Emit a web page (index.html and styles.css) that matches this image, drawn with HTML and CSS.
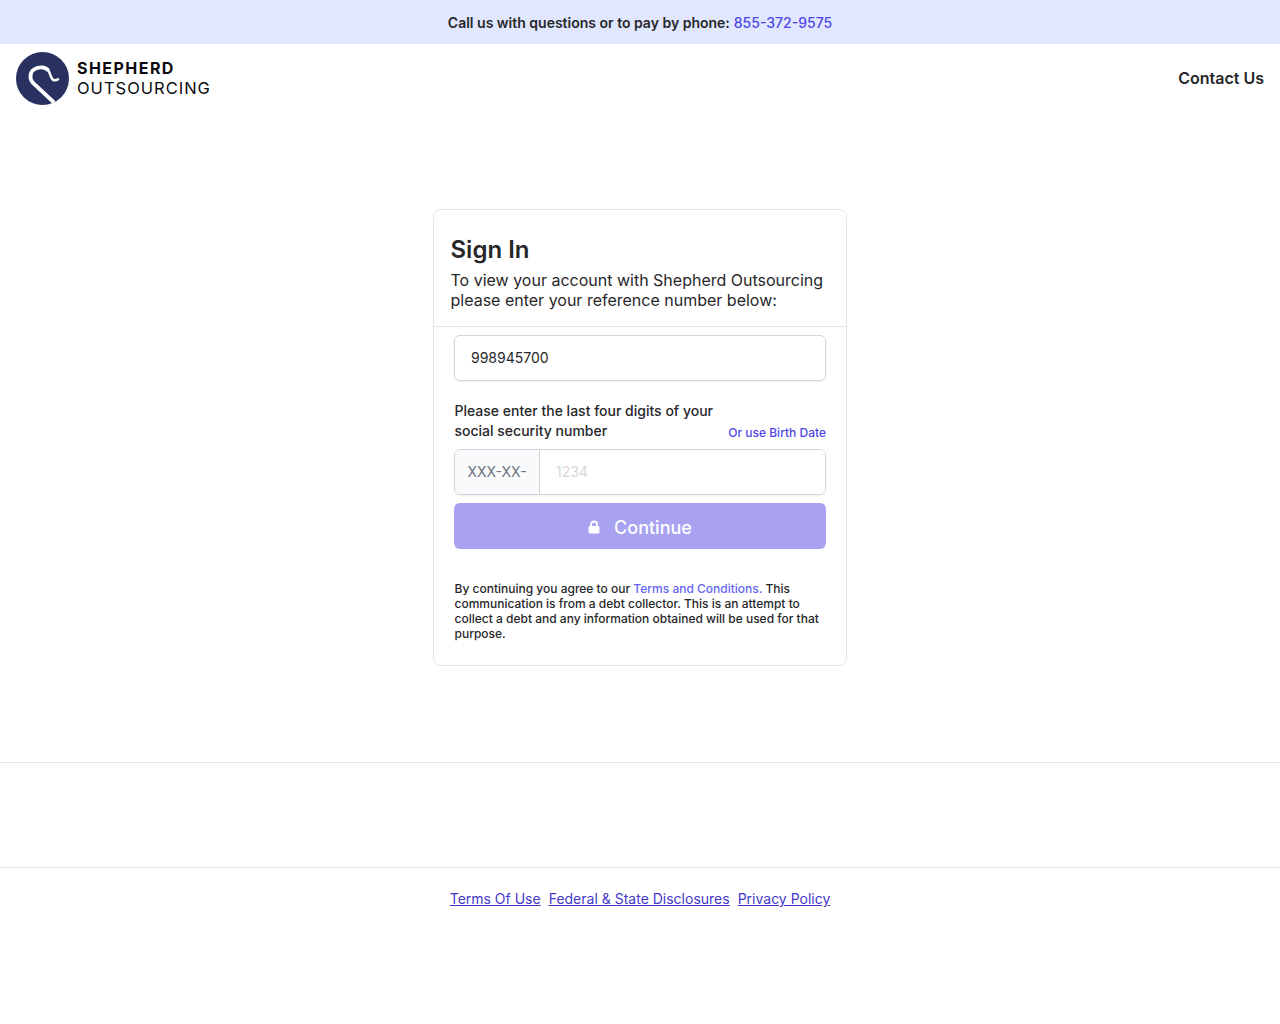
FILE: index.html
```html
<!DOCTYPE html>
<html lang="en">
<head>
<meta charset="utf-8">
<title>Sign In</title>
<link rel="stylesheet" href="styles.css">
</head>
<body>
<div class="banner">Call us with questions or to pay by phone: <a class="phone" href="#">855-372-9575</a></div>
<header class="header">
  <a class="logo" href="#">
    <svg class="logo-mark" viewBox="0 0 53 53" width="53" height="53" aria-hidden="true">
      <circle cx="26.5" cy="26.5" r="26.5" fill="#28315f"/>
      <path d="M38 50.500 L17 31 C13 26.500 14 20 18 17.500 C22 14.500 29 14.500 32.500 18.500" fill="none" stroke="#fff" stroke-width="3.800"/>
      <path d="M32 18 C35 22 34.500 27.500 38 28.300 C39.500 28.500 41 28 42 27.300" fill="none" stroke="#fff" stroke-width="2.500" stroke-linecap="round"/>
    </svg>
    <span class="logo-text"><span class="logo-top">SHEPHERD</span><span class="logo-bottom">OUTSOURCING</span></span>
  </a>
  <a class="contact" href="#">Contact Us</a>
</header>
<main class="main">
  <section class="card">
    <div class="card-head">
      <h1 class="title">Sign In</h1>
      <p class="intro">To view your account with Shepherd Outsourcing please enter your reference number below:</p>
    </div>
    <form class="form">
      <input class="input" type="text" value="998945700">
      <div class="label-row">
        <label class="label">Please enter the last four digits of your social security number</label>
        <a class="alt" href="#">Or use Birth Date</a>
      </div>
      <div class="group">
        <span class="prefix">XXX-XX-</span>
        <input class="group-input" type="text" placeholder="1234">
      </div>
      <button class="button" type="button">
        <svg class="lock" viewBox="0 0 12 14" width="12" height="14" aria-hidden="true">
          <path d="M3 6.500 V4.500 a3 3 0 0 1 6 0 V6.500" fill="none" stroke="#fff" stroke-width="1.800"/>
          <rect x="0.500" y="6" width="11" height="7.500" rx="1.500" fill="#fff"/>
        </svg>
        Continue
      </button>
      <p class="legal">By continuing you agree to our <a class="terms" href="#">Terms and Conditions.</a> This communication is from a debt collector. This is an attempt to collect a debt and any information obtained will be used for that purpose.</p>
    </form>
  </section>
</main>
<div class="spacer"></div>
<footer class="footer">
  <a href="#">Terms Of Use</a>
  <a href="#">Federal &amp; State Disclosures</a>
  <a href="#">Privacy Policy</a>
</footer>
</body>
</html>
```
FILE: styles.css
```css
* { box-sizing: border-box; }
html, body { margin: 0; padding: 0; }
body {
  font-family: Inter, "Liberation Sans", sans-serif;
  color: #1f2328;
  background: #fff;
  font-size: 16px;
}
a { text-decoration: none; }
.banner {
  height: 44px;
  background: #e0e7ff;
  display: flex;
  align-items: center;
  justify-content: center;
  gap: 4px;
  font-size: 14px;
  font-weight: 600;
  color: #27272a;
}
.phone { color: #4f46e5; font-weight: 500; }
.header {
  height: 69px;
  padding: 8px 16px;
  display: flex;
  justify-content: space-between;
  align-items: flex-start;
}
.logo { display: flex; align-items: center; gap: 8px; color: #0c0c10; }
.logo-mark { display: block; }
.logo-text { display: flex; flex-direction: column; line-height: 21px; }
.logo-top { font-size: 16px; font-weight: 700; letter-spacing: 1.45px; }
.logo-bottom { font-size: 16.500px; font-weight: 400; letter-spacing: 1px; margin-top: -1px; }
.contact { font-weight: 600; color: #27272a; margin-top: 16px; line-height: 20px; }
.main { padding-top: 96px; display: flex; justify-content: center; }
.card {
  width: 414px;
  height: 457px;
  border: 1px solid #e5e7eb;
  border-radius: 8px;
}
.card-head { padding: 24px 16px 16px 16.500px; height: 117px; border-bottom: 1px solid #e5e7eb; }
.title { margin: 0; font-size: 24px; font-weight: 600; line-height: 32px; color: #27272a; }
.intro { margin: 4px 0 0; font-size: 16px; line-height: 20px; color: #27272a; }
.form { padding: 8px 20px 0; display: flex; flex-direction: column; }
.input {
  height: 46px;
  width: 100%;
  border: 1px solid #d1d5db;
  border-radius: 6px;
  padding: 0 16px 2px;
  font: 400 14px Inter, sans-serif;
  color: #27272a;
  box-shadow: 0 1px 2px rgba(0,0,0,.05);
}
.label-row { display: flex; justify-content: space-between; align-items: flex-end; margin-top: 20px; padding-left: 0.500px; }
.label { width: 272px; font-size: 14px; font-weight: 500; line-height: 20px; color: #27272a; }
.alt { font-size: 12px; font-weight: 500; line-height: 16px; color: #4f46e5; }
.group {
  margin-top: 8px;
  height: 46px;
  display: flex;
  border: 1px solid #d1d5db;
  border-radius: 6px;
  overflow: hidden;
  box-shadow: 0 1px 2px rgba(0,0,0,.05);
}
.prefix {
  width: 85px;
  background: #f9fafb;
  border-right: 1px solid #d1d5db;
  display: flex;
  align-items: center;
  justify-content: center;
  font-size: 14px;
  color: #6b7280;
  padding-bottom: 1px;
}
.group-input {
  flex: 1;
  min-width: 0;
  border: 0;
  outline: 0;
  padding: 0 16px 2px;
  font: 400 14px Inter, sans-serif;
}
.group-input::placeholder { color: #d9d6dc; opacity: 1; }
.button {
  margin-top: 8px;
  height: 46px;
  width: 100%;
  border: 0;
  border-radius: 6px;
  background: #a8a2f1;
  color: #fff;
  font: 500 18px Inter, sans-serif;
  display: flex;
  align-items: center;
  justify-content: center;
  gap: 14px;
  padding: 2px 0 0;
}
.lock { display: block; margin-top: -1px; }
.legal { margin: 32px 0 0; padding-left: 0.500px; font-size: 12px; font-weight: 500; line-height: 15px; color: #27272a; }
.terms { color: #6366f1; }
.spacer { height: 96px; }
.footer {
  border-top: 1px solid #e5e7eb;
  padding-top: 126px;
  display: flex;
  justify-content: center;
  gap: 8px;
  font-size: 14px;
  line-height: 20px;
  position: relative;
}
.footer::after {
  content: "";
  position: absolute;
  left: 0;
  right: 0;
  top: 104px;
  border-top: 1px solid #e5e7eb;
}
.footer a { color: #4338ca; text-decoration: underline; }
```
